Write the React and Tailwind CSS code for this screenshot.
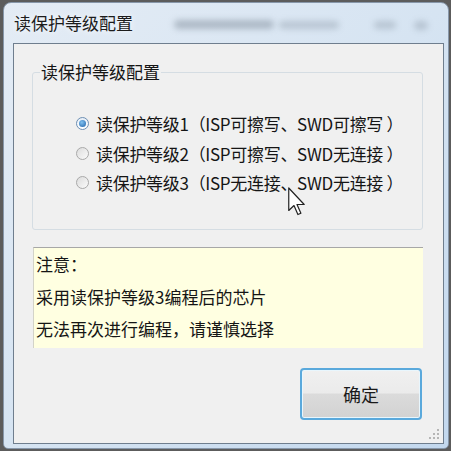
export default function App() {
  const font = { fontFamily: '"Noto Sans CJK SC", "Noto Sans", sans-serif' };
  const Radio = ({ checked }) => (
    <span
      className={
        "relative inline-block w-[13px] h-[13px] rounded-full border shrink-0 " +
        (checked
          ? "border-[#6d8fb3] bg-gradient-to-b from-[#e6eef7] to-[#ffffff]"
          : "border-[#a9a9a9] bg-gradient-to-br from-[#dcdcdc] to-[#fbfbfb]")
      }
    >
      {checked && (
        <span className="absolute left-[2px] top-[2px] w-[7px] h-[7px] rounded-full bg-[radial-gradient(circle_at_40%_35%,#7fc0f0,#1f62a8)]" />
      )}
    </span>
  );
  const rows = [
    { t: "读保护等级1（ISP可擦写、SWD可擦写 ）", c: true },
    { t: "读保护等级2（ISP可擦写、SWD无连接 ）", c: false },
    { t: "读保护等级3（ISP无连接、SWD无连接 ）", c: false },
  ];
  return (
    <div
      className="relative w-[451px] h-[451px] overflow-hidden bg-[#5c5c5c] pt-[2px] pl-[3px]"
      style={font}
    >
      <div className="w-[446px] h-[447px] rounded-t-[8px] rounded-b-[5px] border border-[#8797aa] bg-gradient-to-br from-[#e4ecf5] via-[#d6e4f2] to-[#c3d8ee] flex flex-col">
        <div className="relative h-[40px] flex items-center pl-[10px] text-[17px] text-[#1c1c1c]">
          <span className="[text-shadow:0_0_6px_#ffffff]">读保护等级配置</span>
          <div className="absolute left-[170px] top-[17px] w-[100px] h-[9px] rounded-full bg-[#7d8a98] opacity-50 blur-[3px]" />
          <div className="absolute left-[275px] top-[18px] w-[60px] h-[8px] rounded-full bg-[#8794a2] opacity-40 blur-[3px]" />
          <div className="absolute left-[370px] top-[18px] w-[22px] h-[8px] rounded-full bg-[#8794a2] opacity-40 blur-[3px]" />
          <div className="absolute left-[410px] top-[18px] w-[14px] h-[9px] rounded-full bg-[#8794a2] opacity-40 blur-[3px]" />
        </div>
        <div className="relative ml-[9px] w-[431px] h-[401px] border border-[#6f7e8e] bg-[#f0f0f0] flex flex-col text-[#151515]">
          <div className="relative mt-[28px] ml-[18px] w-[391px] h-[158px] border border-[#d5dde3] rounded-[3px]">
            <span className="absolute left-[7px] top-[-12px] px-[1px] bg-[#f0f0f0] text-[17px] leading-[22px]">
              读保护等级配置
            </span>
            <div className="flex flex-col pt-[36px] pl-[43px]">
              {rows.map((r, i) => (
                <div key={i} className="flex items-center h-[29.5px] gap-[7px] text-[17px] tracking-[-0.3px] whitespace-pre">
                  <Radio checked={r.c} />
                  <span>{r.t}</span>
                </div>
              ))}
            </div>
          </div>
          <div className="mt-[17px] ml-[19px] w-[390px] h-[101px] bg-[#ffffe1] border-t border-t-[#a7a7a7] border-l border-l-[#d3d3c8] pl-[2px] text-[17px] leading-[32.5px]">
            <div>注意：</div>
            <div>采用读保护等级3编程后的芯片</div>
            <div>无法再次进行编程，请谨慎选择</div>
          </div>
          <div className="mt-[20px] ml-[18px] w-[391px] flex justify-end pr-[1px]">
            <button className="w-[122px] h-[52px] rounded-[4px] border-2 border-[#5aa9dc] shadow-[inset_0_0_0_1px_#e8f6fd] bg-[linear-gradient(#f0f0f0_0%,#ebebeb_48%,#dbdbdb_50%,#d2d2d2_100%)] text-[18px] text-[#1a1a1a] flex items-center justify-center">
              确定
            </button>
          </div>
          <svg className="absolute right-[3px] bottom-[3px]" width="12" height="12" viewBox="0 0 12 12">
            {[
              [10, 2], [10, 6], [6, 6], [10, 10], [6, 10], [2, 10],
            ].map(([x, y], i) => (
              <rect key={i} x={x - 1} y={y - 1} width="2" height="2" fill="#b5b5b5" />
            ))}
          </svg>
        </div>
      </div>
      <svg className="absolute left-[288px] top-[187px]" width="18" height="29" viewBox="0 0 12 19">
        <path
          d="M0.5 0.5 L0.5 15.5 L4 12.2 L6.6 18.2 L8.6 17.3 L6 11.5 L10.8 11.5 Z"
          fill="#ffffff"
          stroke="#222222"
          strokeWidth="0.8"
          strokeLinejoin="round"
        />
      </svg>
    </div>
  );
}
